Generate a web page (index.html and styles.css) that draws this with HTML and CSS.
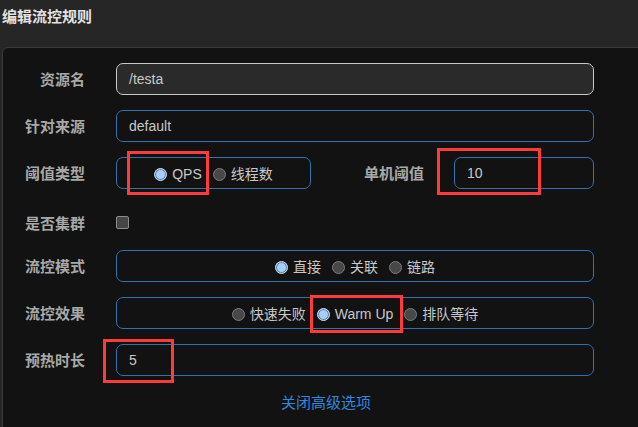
FILE: index.html
```html
<!DOCTYPE html>
<html lang="zh">
<head>
<meta charset="utf-8">
<title>编辑流控规则</title>
<link rel="stylesheet" href="styles.css">
</head>
<body>
<div class="page">
  <div class="header"><h1 class="title">编辑流控规则</h1></div>
  <div class="panel">
    <div class="row">
      <span class="label">资源名</span>
      <div class="input input-disabled">/testa</div>
    </div>
    <div class="row">
      <span class="label">针对来源</span>
      <div class="input">default</div>
    </div>
    <div class="row">
      <span class="label">阈值类型</span>
      <div class="split">
        <div class="group group-small">
          <span class="opt"><span class="radio checked"></span>QPS</span>
          <span class="opt"><span class="radio"></span>线程数</span>
        </div>
        <span class="label label-inline">单机阈值</span>
        <div class="input input-grow">10</div>
      </div>
    </div>
    <div class="row row-check">
      <span class="label">是否集群</span>
      <div class="check-wrap"><span class="checkbox"></span></div>
    </div>
    <div class="row">
      <span class="label">流控模式</span>
      <div class="group">
        <span class="opt"><span class="radio checked"></span>直接</span>
        <span class="opt"><span class="radio"></span>关联</span>
        <span class="opt"><span class="radio"></span>链路</span>
      </div>
    </div>
    <div class="row">
      <span class="label">流控效果</span>
      <div class="group">
        <span class="opt"><span class="radio"></span>快速失败</span>
        <span class="opt"><span class="radio checked"></span>Warm Up</span>
        <span class="opt"><span class="radio"></span>排队等待</span>
      </div>
    </div>
    <div class="row">
      <span class="label">预热时长</span>
      <div class="input">5</div>
    </div>
    <div class="link-row"><a class="link">关闭高级选项</a></div>
  </div>
  <div class="mark mark-qps"></div>
  <div class="mark mark-count"></div>
  <div class="mark mark-warm"></div>
  <div class="mark mark-time"></div>
</div>
</body>
</html>
```

FILE: styles.css
```css
* { box-sizing: border-box; }
html, body {
  margin: 0;
  padding: 0;
  background: #121212;
  overflow: hidden;
}
body {
  font-family: "Liberation Sans", "Noto Sans CJK SC", sans-serif;
  color: #c8c8c8;
}
.page {
  position: relative;
  width: 638px;
  height: 427px;
  overflow: hidden;
  background: #262626;
}
.header {
  height: 47px;
  padding: 5px 2px 0;
}
.title {
  margin: 0;
  font-family: "Noto Sans CJK SC", sans-serif;
  font-size: 15px;
  line-height: 21px;
  font-weight: 700;
  color: #e2e2e2;
}
.panel {
  margin-left: 2px;
  width: 648px;
  height: 400px;
  background: #121212;
  border: 1px solid #3a3a3a;
  border-radius: 6px 6px 0 0;
  padding: 15px 55px 0 0;
}
.row {
  display: grid;
  grid-template-columns: 82px 1fr;
  column-gap: 31px;
  align-items: center;
  height: 32px;
  margin-bottom: 15px;
}
.row-check {
  height: 31px;
  padding-top: 6px;
}
.label {
  text-align: right;
  font-family: "Noto Sans CJK SC", sans-serif;
  font-size: 15px;
  font-weight: 700;
  line-height: 20px;
  color: #a8a8a8;
}
.input {
  height: 32px;
  border: 1px solid #3372ad;
  border-radius: 7px;
  padding: 0 12px;
  font-size: 14px;
  line-height: 30px;
  color: #c8c8c8;
}
.input-disabled {
  border-color: #c9c9c9;
  background: #2a2a2a;
}
.split {
  display: flex;
  align-items: center;
  height: 32px;
}
.label-inline {
  width: 113px;
  flex: none;
  margin-right: 30px;
}
.input-grow { flex: 1; }
.group {
  height: 32px;
  border: 1px solid #3372ad;
  border-radius: 7px;
  display: flex;
  align-items: center;
  justify-content: center;
  gap: 11px;
  font-size: 14px;
  color: #c8c8c8;
}
.group-small {
  width: 195px;
  flex: none;
}
.opt {
  display: flex;
  align-items: center;
  gap: 5px;
  line-height: 18px;
  padding-top: 2px;
}
.radio {
  width: 13px;
  height: 13px;
  border-radius: 50%;
  background: #484848;
  border: 1px solid #7c7c7c;
  flex: none;
}
.radio.checked {
  background: #a6cfff;
  border: 1px solid #d0d8e2;
  box-shadow: inset 0 0 0 1px #4f7fb2;
}
.check-wrap {
  display: flex;
  align-items: center;
  height: 25px;
}
.checkbox {
  width: 13px;
  height: 13px;
  background: #464646;
  border: 1px solid #8c8c8c;
  border-radius: 2px;
}
.link-row {
  text-align: center;
  padding-left: 55px;
  margin-top: 1px;
}
.link {
  font-family: "Noto Sans CJK SC", sans-serif;
  font-size: 15px;
  line-height: 22px;
  color: #2f88dc;
}
.mark {
  position: absolute;
  border: 3px solid #ff3a3a;
}
.mark-qps { left: 127px; top: 151px; width: 82px; height: 44px; }
.mark-count { left: 437px; top: 148px; width: 104px; height: 47px; }
.mark-warm { left: 310px; top: 295px; width: 93px; height: 38px; }
.mark-time { left: 103px; top: 339px; width: 71px; height: 44px; }
```
